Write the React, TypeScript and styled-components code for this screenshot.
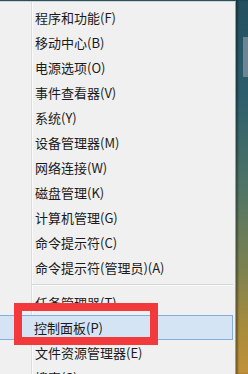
import React from "react";
import styled, { createGlobalStyle } from "styled-components";

const GlobalStyle = createGlobalStyle`
  html, body {
    margin: 0;
    padding: 0;
    width: 248px;
    height: 374px;
    overflow: hidden;
  }
  body {
    font-family: "Noto Sans CJK SC", "Noto Sans", sans-serif;
  }
`;

const Screen = styled.div`
  position: relative;
  display: flex;
  width: 248px;
  height: 374px;
  background: #24505f;
  overflow: hidden;
`;

const Menu = styled.div`
  width: 236px;
  margin-top: 1px;
  box-sizing: border-box;
  padding: 3px 2px 0 0;
  border-top: 1px solid #d2d2d2;
  border-right: 1px solid #9c9c9c;
  background:
    linear-gradient(
      to right,
      transparent 31px,
      #dcdcdc 31px,
      #dcdcdc 32px,
      #fbfbfb 32px,
      #fbfbfb 33px,
      transparent 33px
    ),
    #f0f0f0;
  overflow: hidden;
`;

const Item = styled.div<{ $active?: boolean }>`
  height: 25px;
  box-sizing: border-box;
  display: flex;
  align-items: center;
  padding-left: ${(p) => (p.$active ? "34px" : "35px")};
  font-size: 13px;
  line-height: 1;
  color: #1a1a1a;
  white-space: nowrap;
  background: ${(p) => (p.$active ? "#d5e4f5" : "transparent")};
  border: ${(p) => (p.$active ? "1px solid #84acdd" : "none")};
  border-left: none;
`;

const Separator = styled.div`
  height: 10px;
  margin-left: 32px;
  display: flex;
  flex-direction: column;
  justify-content: center;
  &::before {
    content: "";
    display: block;
    height: 1px;
    background: #d6d6d6;
  }
  &::after {
    content: "";
    display: block;
    height: 1px;
    background: #fafafa;
  }
`;

const Desktop = styled.div`
  flex: 1;
  position: relative;
  background: linear-gradient(
    to bottom,
    #24505f 0%,
    #2c5d6c 25%,
    #4f7466 50%,
    #7c8250 72%,
    #a98c3c 88%,
    #c0923a 100%
  );
  box-shadow: inset 2px 0 2px rgba(0, 0, 0, 0.35);
`;

const ScrollTab = styled.div`
  position: absolute;
  right: 0;
  top: 37px;
  width: 5px;
  height: 40px;
  background: #8a9aa2;
  opacity: 0.7;
`;

const Annotation = styled.div`
  position: absolute;
  left: 14px;
  top: 303px;
  width: 144px;
  height: 42px;
  box-sizing: border-box;
  border: 8px solid #f23a3c;
  pointer-events: none;
`;

const top = [
  "程序和功能(F)",
  "移动中心(B)",
  "电源选项(O)",
  "事件查看器(V)",
  "系统(Y)",
  "设备管理器(M)",
  "网络连接(W)",
  "磁盘管理(K)",
  "计算机管理(G)",
  "命令提示符(C)",
  "命令提示符(管理员)(A)",
];

const bottom = ["任务管理器(T)", "控制面板(P)", "文件资源管理器(E)", "搜索(S)"];

export default function App() {
  return (
    <>
      <GlobalStyle />
      <Screen>
        <Menu>
          {top.map((t) => (
            <Item key={t}>{t}</Item>
          ))}
          <Separator />
          {bottom.map((t) => (
            <Item key={t} $active={t === "控制面板(P)"}>
              {t}
            </Item>
          ))}
        </Menu>
        <Desktop>
          <ScrollTab />
        </Desktop>
        <Annotation />
      </Screen>
    </>
  );
}
